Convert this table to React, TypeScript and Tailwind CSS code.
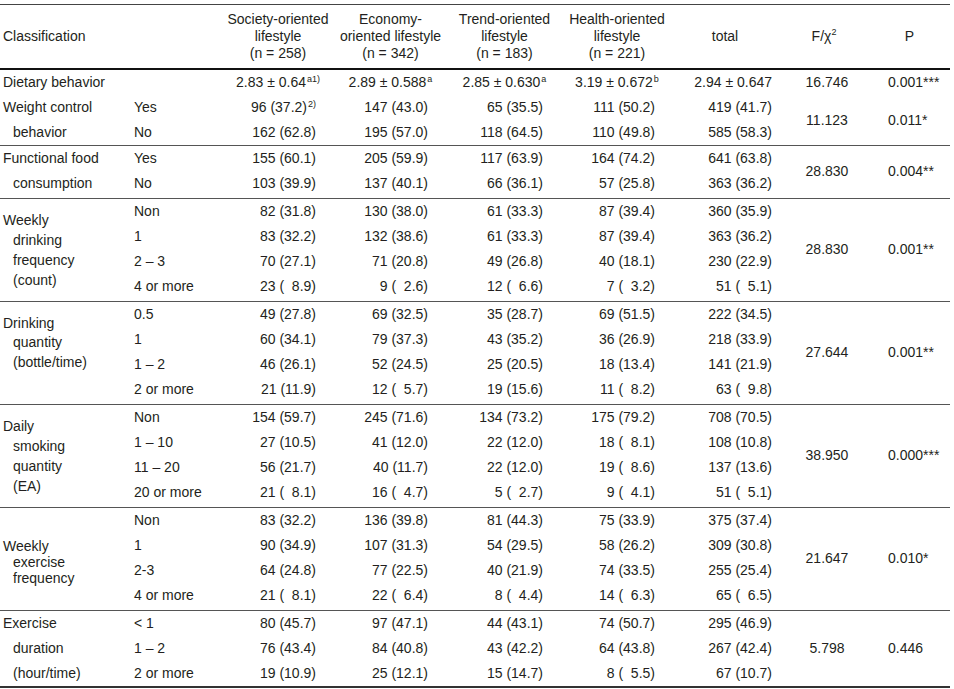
import React from "react";

type Row = { sub: string; vals: string[]; sup?: string };
type Group = {
  label: string[];
  mode: "rows" | "tall";
  labelCls?: string;
  rows: Row[];
  f: string;
  p: string;
};

const F = "\u2007";

const groups: Group[] = [
  {
    label: ["Weight control", "behavior"],
    mode: "rows",
    rows: [
      { sub: "Yes", vals: ["96 (37.2)", "147 (43.0)", "65 (35.5)", "111 (50.2)", "419 (41.7)"], sup: "2)" },
      { sub: "No", vals: ["162 (62.8)", "195 (57.0)", "118 (64.5)", "110 (49.8)", "585 (58.3)"] },
    ],
    f: "11.123",
    p: "0.011*",
  },
  {
    label: ["Functional food", "consumption"],
    mode: "rows",
    rows: [
      { sub: "Yes", vals: ["155 (60.1)", "205 (59.9)", "117 (63.9)", "164 (74.2)", "641 (63.8)"] },
      { sub: "No", vals: ["103 (39.9)", "137 (40.1)", "66 (36.1)", "57 (25.8)", "363 (36.2)"] },
    ],
    f: "28.830",
    p: "0.004**",
  },
  {
    label: ["Weekly", "drinking", "frequency", "(count)"],
    mode: "tall",
    labelCls: "leading-[20px] pt-[2px]",
    rows: [
      { sub: "Non", vals: ["82 (31.8)", "130 (38.0)", "61 (33.3)", "87 (39.4)", "360 (35.9)"] },
      { sub: "1", vals: ["83 (32.2)", "132 (38.6)", "61 (33.3)", "87 (39.4)", "363 (36.2)"] },
      { sub: "2 \u2013 3", vals: ["70 (27.1)", "71 (20.8)", "49 (26.8)", "40 (18.1)", "230 (22.9)"] },
      { sub: "4 or more", vals: [`23 (${F}8.9)`, `9 (${F}2.6)`, `12 (${F}6.6)`, `7 (${F}3.2)`, `51 (${F}5.1)`] },
    ],
    f: "28.830",
    p: "0.001**",
  },
  {
    label: ["Drinking", "quantity", "(bottle/time)"],
    mode: "tall",
    labelCls: "leading-[19.5px] pb-[18px]",
    rows: [
      { sub: "0.5", vals: ["49 (27.8)", "69 (32.5)", "35 (28.7)", "69 (51.5)", "222 (34.5)"] },
      { sub: "1", vals: ["60 (34.1)", "79 (37.3)", "43 (35.2)", "36 (26.9)", "218 (33.9)"] },
      { sub: "1 \u2013 2", vals: ["46 (26.1)", "52 (24.5)", "25 (20.5)", "18 (13.4)", "141 (21.9)"] },
      { sub: "2 or more", vals: ["21 (11.9)", `12 (${F}5.7)`, "19 (15.6)", `11 (${F}8.2)`, `63 (${F}9.8)`] },
    ],
    f: "27.644",
    p: "0.001**",
  },
  {
    label: ["Daily", "smoking", "quantity", "(EA)"],
    mode: "tall",
    labelCls: "leading-[20px] pt-[2px]",
    rows: [
      { sub: "Non", vals: ["154 (59.7)", "245 (71.6)", "134 (73.2)", "175 (79.2)", "708 (70.5)"] },
      { sub: "1 \u2013 10", vals: ["27 (10.5)", "41 (12.0)", "22 (12.0)", `18 (${F}8.1)`, "108 (10.8)"] },
      { sub: "11 \u2013 20", vals: ["56 (21.7)", "40 (11.7)", "22 (12.0)", `19 (${F}8.6)`, "137 (13.6)"] },
      { sub: "20 or more", vals: [`21 (${F}8.1)`, `16 (${F}4.7)`, `5 (${F}2.7)`, `9 (${F}4.1)`, `51 (${F}5.1)`] },
    ],
    f: "38.950",
    p: "0.000***",
  },
  {
    label: ["Weekly", "exercise", "frequency"],
    mode: "tall",
    labelCls: "leading-[16px] pt-[8px]",
    rows: [
      { sub: "Non", vals: ["83 (32.2)", "136 (39.8)", "81 (44.3)", "75 (33.9)", "375 (37.4)"] },
      { sub: "1", vals: ["90 (34.9)", "107 (31.3)", "54 (29.5)", "58 (26.2)", "309 (30.8)"] },
      { sub: "2-3", vals: ["64 (24.8)", "77 (22.5)", "40 (21.9)", "74 (33.5)", "255 (25.4)"] },
      { sub: "4 or more", vals: [`21 (${F}8.1)`, `22 (${F}6.4)`, `8 (${F}4.4)`, `14 (${F}6.3)`, `65 (${F}6.5)`] },
    ],
    f: "21.647",
    p: "0.010*",
  },
  {
    label: ["Exercise", "duration", "(hour/time)"],
    mode: "rows",
    rows: [
      { sub: "< 1", vals: ["80 (45.7)", "97 (47.1)", "44 (43.1)", "74 (50.7)", "295 (46.9)"] },
      { sub: "1 \u2013 2", vals: ["76 (43.4)", "84 (40.8)", "43 (42.2)", "64 (43.8)", "267 (42.4)"] },
      { sub: "2 or more", vals: ["19 (10.9)", "25 (12.1)", "15 (14.7)", `8 (${F}5.5)`, "67 (10.7)"] },
    ],
    f: "5.798",
    p: "0.446",
  },
];

const valPad = ["pr-[18px]", "pr-[19px]", "pr-[19px]", "pr-[17px]", "pr-[6px]"];
const colW = ["w-[112px]", "w-[113px]", "w-[115px]", "w-[110px]", "w-[106px]"];

function Sup({ t }: { t: string }) {
  return <span className="relative -top-[5px] text-[9px] leading-none ml-[1px]">{t}</span>;
}

function Label({ g }: { g: Group }) {
  if (g.mode === "rows") {
    return (
      <div className="w-[131px] pl-[3px]">
        {g.label.map((l, i) => (
          <div key={i} className={`h-[25px] leading-[25px] whitespace-nowrap ${i > 0 ? "pl-[10px]" : ""}`}>
            {l}
          </div>
        ))}
      </div>
    );
  }
  return (
    <div className={`w-[131px] pl-[3px] flex flex-col justify-center ${g.labelCls ?? ""}`}>
      {g.label.map((l, i) => (
        <div key={i} className={`whitespace-nowrap ${i > 0 ? "pl-[10px]" : ""}`}>
          {l}
        </div>
      ))}
    </div>
  );
}

export default function App() {
  return (
    <div
      className="bg-white text-[#231f20] text-[14px] pt-[4px] min-h-[689px]"
      style={{ fontFamily: '"Liberation Sans", Arial, sans-serif' }}
    >
      <div className="w-[950px] border-t border-[#444]">
        <div className="flex h-[65px] items-center leading-[17px] border-b-2 border-[#111]">
          <div className="w-[222px] pl-[3px]">Classification</div>
          <div className="w-[112px] text-center whitespace-nowrap">
            Society-oriented
            <br />
            lifestyle
            <br />
            (n = 258)
          </div>
          <div className="w-[113px] text-center whitespace-nowrap">
            Economy-
            <br />
            oriented lifestyle
            <br />
            (n = 342)
          </div>
          <div className="w-[115px] text-center whitespace-nowrap">
            Trend-oriented
            <br />
            lifestyle
            <br />
            (n = 183)
          </div>
          <div className="w-[110px] text-center whitespace-nowrap">
            Health-oriented
            <br />
            lifestyle
            <br />
            (n = 221)
          </div>
          <div className="w-[106px] text-center">total</div>
          <div className="w-[92px] text-center">
            F/χ<span className="relative -top-[6px] text-[9px] leading-none">2</span>
          </div>
          <div className="w-[79px] text-center">P</div>
        </div>

        <div className="flex h-[25px] items-center whitespace-nowrap">
          <div className="w-[222px] pl-[3px]">Dietary behavior</div>
          <div className="w-[112px] text-center">
            2.83 ± 0.64<Sup t="a1)" />
          </div>
          <div className="w-[113px] text-center">
            2.89 ± 0.588<Sup t="a" />
          </div>
          <div className="w-[115px] text-center">
            2.85 ± 0.630<Sup t="a" />
          </div>
          <div className="w-[110px] text-center">
            3.19 ± 0.672<Sup t="b" />
          </div>
          <div className="w-[106px] text-right pr-[6px]">2.94 ± 0.647</div>
          <div className="w-[92px] text-center pl-[6px]">16.746</div>
          <div className="w-[79px] pl-[18px]">0.001***</div>
        </div>

        {groups.map((g, gi) => {
          const last = gi === groups.length - 1;
          return (
            <div
              key={gi}
              className={`flex ${last ? "border-b-2 border-[#333]" : "border-b border-[#555]"} ${
                gi === 0 || last ? "" : "pb-[2px]"
              }`}
            >
              <Label g={g} />
              <div className="flex flex-col">
                {g.rows.map((r, ri) => (
                  <div key={ri} className="flex h-[25px] items-center whitespace-nowrap">
                    <div className="w-[91px] pl-[3px]">{r.sub}</div>
                    {r.vals.map((v, vi) => (
                      <div key={vi} className={`${colW[vi]} text-right ${valPad[vi]}`}>
                        {v}
                        {vi === 0 && r.sup ? <Sup t={r.sup} /> : null}
                      </div>
                    ))}
                  </div>
                ))}
              </div>
              <div className="w-[92px] flex items-center justify-center pl-[6px]">{g.f}</div>
              <div className="w-[79px] flex items-center pl-[18px]">{g.p}</div>
            </div>
          );
        })}
      </div>
    </div>
  );
}
